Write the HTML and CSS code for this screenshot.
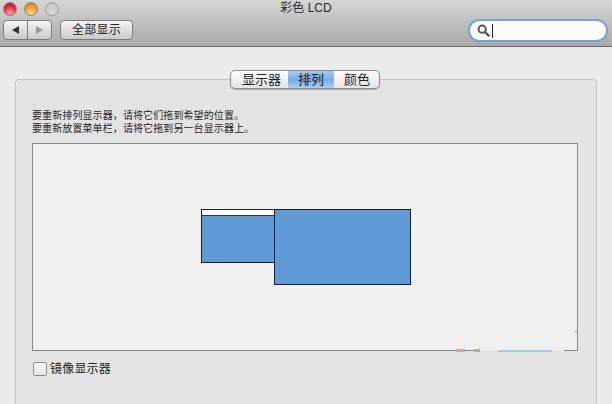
FILE: index.html
```html
<!DOCTYPE html>
<html lang="zh-CN">
<head>
    <meta charset="UTF-8">
    <meta name="viewport" content="width=device-width, initial-scale=1.0">
    <title>彩色 LCD</title>
    <link rel="stylesheet" href="styles.css">
</head>
<body>
    <div class="titlebar">
        <div class="title-row">
            <div class="lights">
                <span class="light red"></span>
                <span class="light orange"></span>
                <span class="light grey"></span>
            </div>
            <span class="title">彩色 LCD</span>
        </div>
        <div class="tools">
            <div class="nav">
                <span class="nav-btn"><span class="arrow-left"></span></span>
                <span class="nav-btn"><span class="arrow-right"></span></span>
            </div>
            <span class="show-all">全部显示</span>
            <div class="search">
                <svg class="search-icon" width="13" height="13" viewBox="0 0 13 13">
                    <circle cx="5.2" cy="5.2" r="3.6" fill="none" stroke="#55555a" stroke-width="2"/>
                    <path d="M8 8l3.6 3.6" stroke="#55555a" stroke-width="2.4" stroke-linecap="round"/>
                </svg>
                <span class="caret"></span>
            </div>
        </div>
    </div>

    <div class="content">
        <div class="group">
            <div class="tabs">
                <span class="tab">显示器</span>
                <span class="tab active">排列</span>
                <span class="tab">颜色</span>
            </div>
            <div class="hint">
                <p>要重新排列显示器，请将它们拖到希望的位置。</p>
                <p>要重新放置菜单栏，请将它拖到另一台显示器上。</p>
            </div>
            <div class="canvas">
                <div class="display small"><div class="menubar"></div></div>
                <div class="display large"></div>
                <span class="speck red-speck"></span>
                <span class="speck green-speck"></span>
                <span class="speck blue-speck"></span>
                <span class="speck gap-speck"></span>
                <span class="speck dot-speck"></span>
            </div>
            <label class="mirror">
                <span class="checkbox"></span>
                <span>镜像显示器</span>
            </label>
        </div>
    </div>
</body>
</html>
```

FILE: styles.css
```css
html, body {
    margin: 0;
    padding: 0;
}
body {
    width: 612px;
    height: 404px;
    overflow: hidden;
    background-color: #ececec;
    font-family: "Liberation Sans", "Noto Sans CJK SC", sans-serif;
    color: #222;
}
.titlebar {
    height: 47px;
    box-sizing: border-box;
    background: linear-gradient(#d6d6d6, #a9a9a9);
    border-bottom: 1px solid #6a6a6a;
}
.title-row {
    position: relative;
    height: 17px;
    display: flex;
    align-items: center;
    padding-left: 3px;
}
.lights {
    display: flex;
    gap: 7px;
}
.light {
    width: 12px;
    height: 12px;
    border-radius: 50%;
    border: 1px solid #8a8a8a;
}
.red {
    background: radial-gradient(circle at 50% 85%, #f9a5a5, #dc2a36 60%, #a81a24);
}
.orange {
    background: radial-gradient(circle at 50% 85%, #fde07a, #f09a2c 60%, #c2701c);
}
.grey {
    background: radial-gradient(circle at 50% 85%, #dedede, #bcbcbc);
    border-color: #a0a0a0;
}
.title {
    position: absolute;
    left: 0;
    right: 0;
    top: 0;
    text-align: center;
    font-size: 12px;
    line-height: 16px;
    color: #2a2a2a;
}
.tools {
    display: flex;
    align-items: flex-start;
    padding: 2px 4px 0 3px;
}
.nav {
    display: flex;
    margin-top: 1px;
    border: 1px solid #7c7c7c;
    border-radius: 4px;
    background: linear-gradient(#f6f6f6, #c9c9c9);
}
.nav-btn {
    width: 23px;
    height: 18px;
    display: flex;
    align-items: center;
    justify-content: center;
}
.nav-btn + .nav-btn {
    border-left: 1px solid #7c7c7c;
}
.arrow-left {
    border-style: solid;
    border-width: 4px 7px 4px 0;
    border-color: transparent #333 transparent transparent;
}
.arrow-right {
    border-style: solid;
    border-width: 4px 0 4px 7px;
    border-color: transparent transparent transparent #9a9a9a;
}
.show-all {
    margin-top: 1px;
    margin-left: 8px;
    width: 71px;
    height: 18px;
    border: 1px solid #7c7c7c;
    border-radius: 4px;
    background: linear-gradient(#f6f6f6, #c9c9c9);
    font-size: 12px;
    line-height: 18px;
    text-align: center;
    letter-spacing: 0.2px;
}
.search {
    margin-left: auto;
    width: 140px;
    height: 23px;
    box-sizing: border-box;
    display: flex;
    align-items: center;
    padding-left: 7px;
    background-color: #fff;
    border: 2px solid #74a3d6;
    border-radius: 12px;
}
.search-icon {
    flex: none;
}
.caret {
    width: 1px;
    height: 14px;
    margin-left: 2px;
    background-color: #222;
}
.content {
    padding: 32px 15px 0;
}
.group {
    height: 340px;
    box-sizing: border-box;
    padding: 0 18px 0 16px;
    background-color: #e4e4e4;
    border: 1px solid #c4c4c4;
    border-bottom: none;
    border-radius: 4px 4px 0 0;
}
.tabs {
    width: max-content;
    height: 17px;
    margin: -10px auto 0;
    display: flex;
    background: linear-gradient(#fdfdfd, #e6e6e6);
    border: 1px solid #8c8c8c;
    border-radius: 5px;
    box-shadow: 0 1px 1px rgba(0, 0, 0, 0.25);
    overflow: hidden;
    font-size: 13px;
    line-height: 17px;
}
.tab {
    padding: 0 10px;
}
.tab:first-child {
    padding: 0 7px 0 11px;
}
.tab:last-child {
    padding: 0 9px 0 10px;
}
.active {
    background: linear-gradient(#a9c8ea, #77aee6 50%, #a9cdee);
}
.hint {
    margin-top: 20px;
    font-size: 10px;
    line-height: 13px;
    letter-spacing: 0.1px;
    color: #262626;
}
.hint p {
    margin: 0;
}
.canvas {
    position: relative;
    width: 546px;
    height: 208px;
    margin-top: 8px;
    box-sizing: border-box;
    background-color: #f1f1f1;
    border: 1px solid #8a8a8a;
}
.display {
    position: absolute;
    box-sizing: border-box;
    background-color: #5f9ad7;
    border: 1px solid #1e1e28;
}
.small {
    left: 168px;
    top: 65px;
    width: 74px;
    height: 54px;
}
.menubar {
    height: 5px;
    background-color: #fff;
    border-bottom: 1px solid #333;
}
.large {
    left: 241px;
    top: 65px;
    width: 137px;
    height: 76px;
}
.speck {
    position: absolute;
}
.red-speck {
    left: 423px;
    bottom: -2px;
    width: 9px;
    height: 3px;
    background-color: #e49a9a;
}
.green-speck {
    left: 441px;
    bottom: -2px;
    width: 6px;
    height: 3px;
    background-color: #8ec29c;
}
.gap-speck {
    left: 447px;
    bottom: -1px;
    width: 84px;
    height: 1px;
    background-color: #e8e8e8;
}
.blue-speck {
    left: 465px;
    bottom: -2px;
    width: 54px;
    height: 2px;
    background-color: #a0cde6;
    z-index: 1;
}
.dot-speck {
    right: 0;
    bottom: 17px;
    width: 2px;
    height: 3px;
    background-color: #b5d6ec;
}
.mirror {
    display: flex;
    align-items: center;
    gap: 3px;
    margin-top: 10px;
    margin-left: 1px;
    font-size: 12px;
    line-height: 16px;
    letter-spacing: 0.2px;
}
.checkbox {
    width: 12px;
    height: 12px;
    background: linear-gradient(#fbfbfb, #e6e6e6);
    border: 1px solid #8c8c8c;
    border-radius: 2px;
}
```
